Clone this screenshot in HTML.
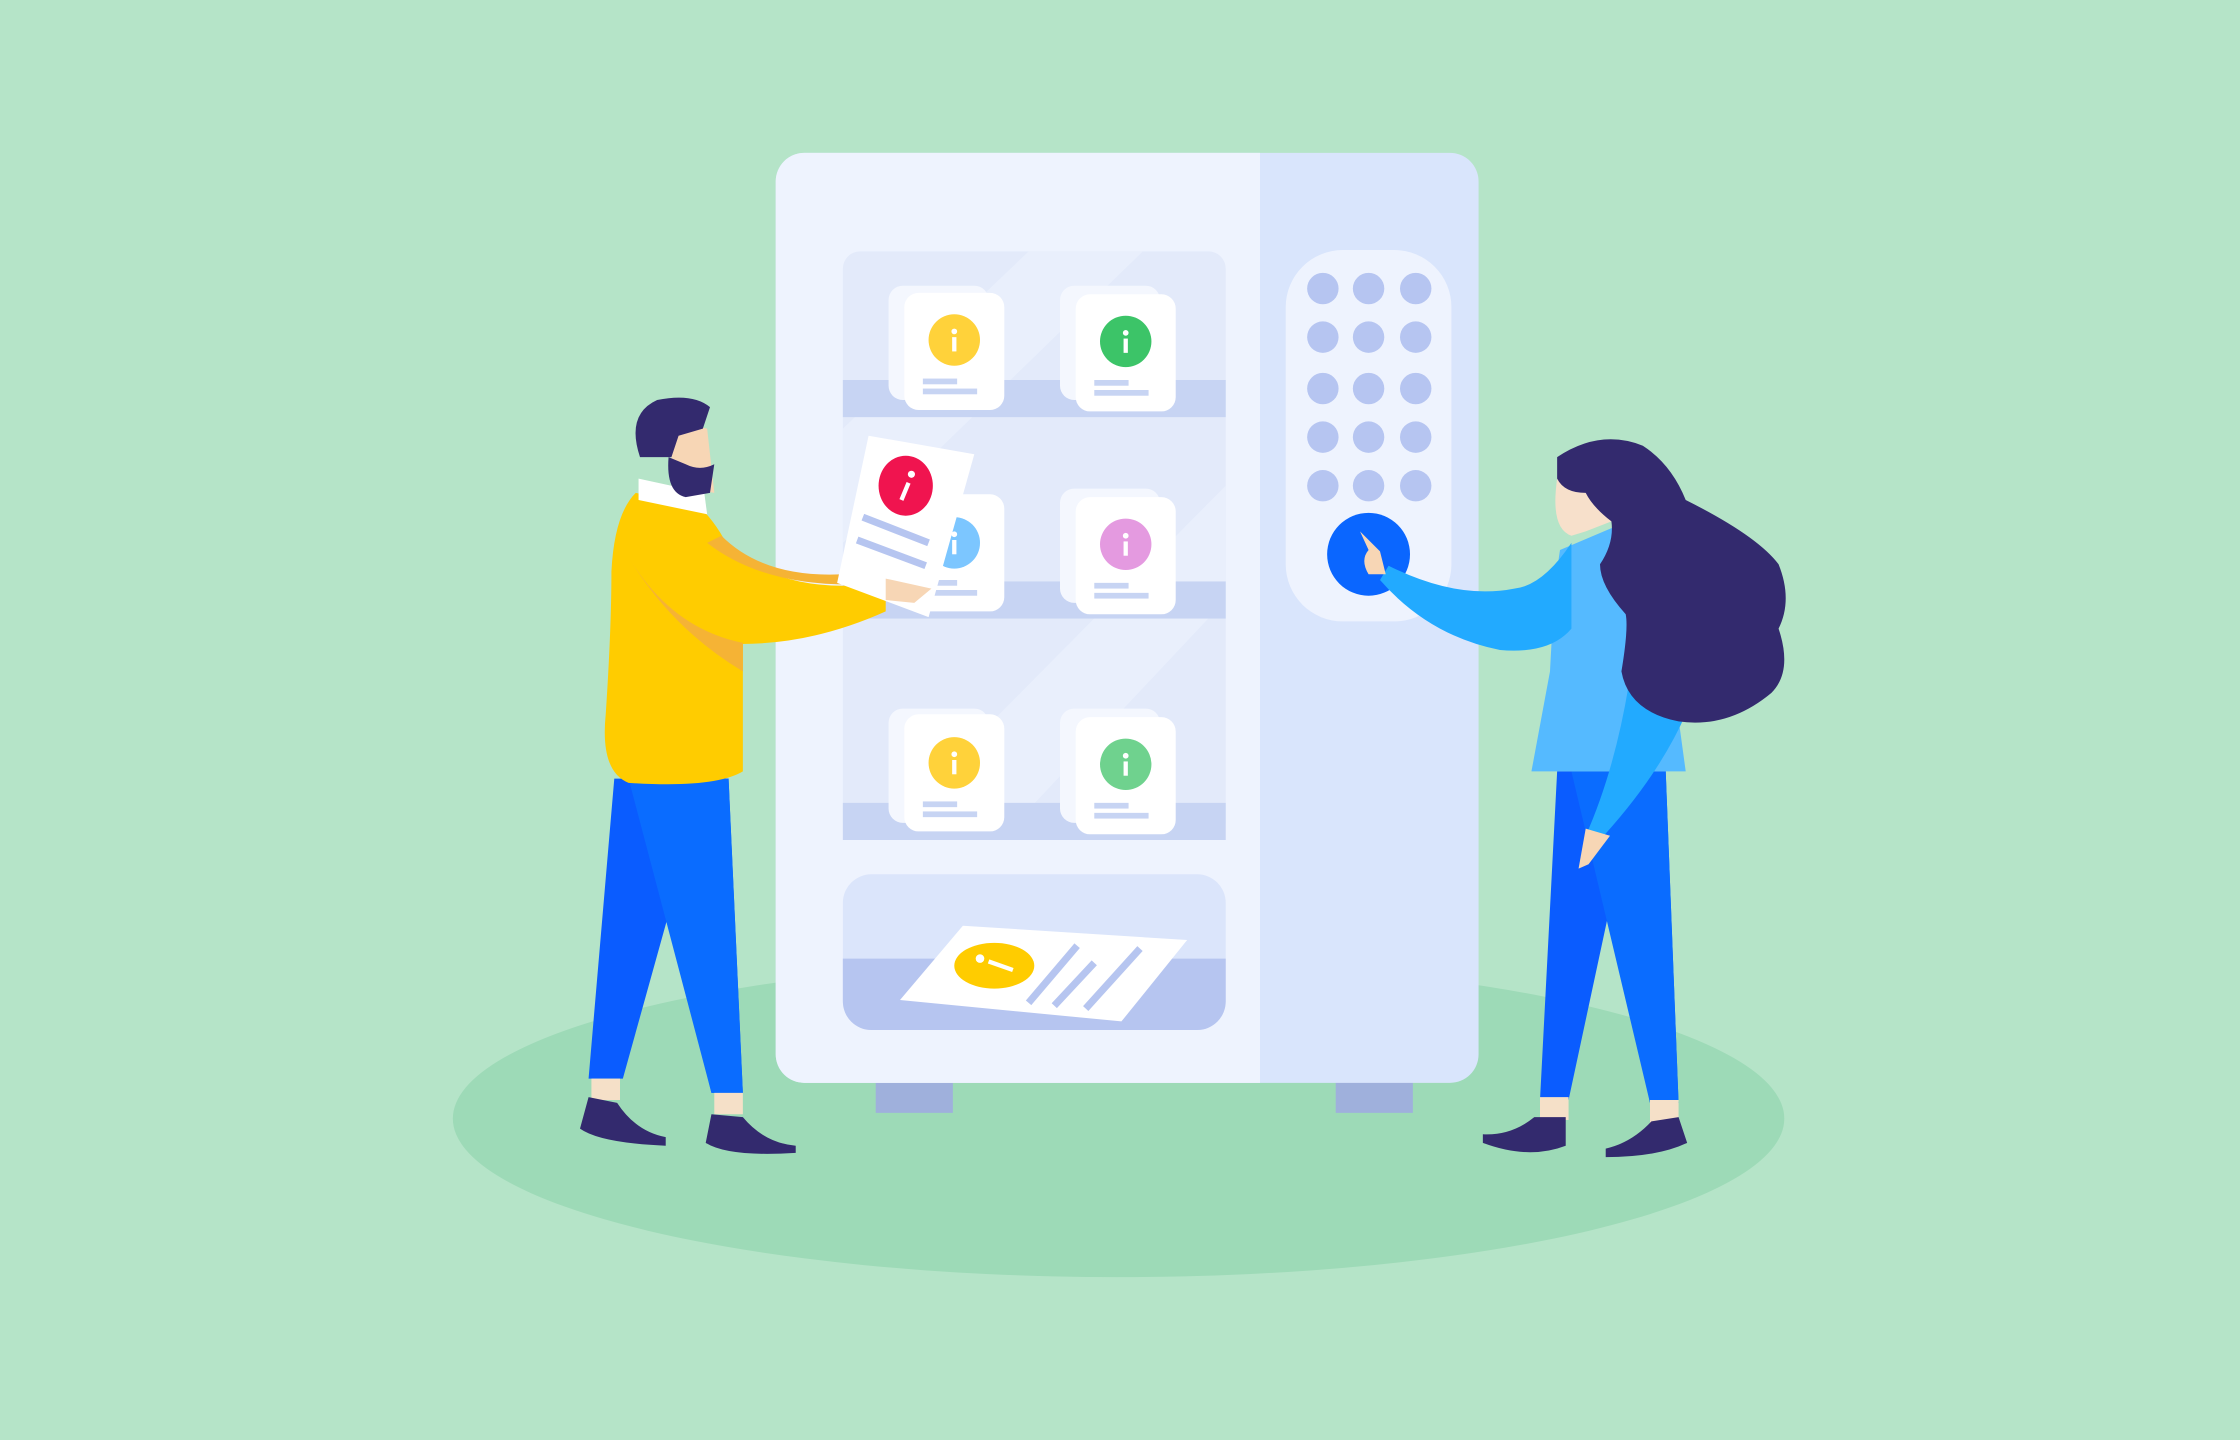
<!DOCTYPE html>
<html><head><meta charset="utf-8"><style>html,body{margin:0;padding:0;background:#b5e4c8}svg{display:block}</style></head><body>
<svg width="2240" height="1440" viewBox="0 0 1568 1008" xmlns="http://www.w3.org/2000/svg">
<rect width="1568" height="1008" fill="#b5e4c8"/>
<ellipse cx="783" cy="783" rx="466" ry="111" fill="#9ddab7"/>
<rect x="613" y="756" width="54" height="23" fill="#9fb0dc"/>
<rect x="935" y="756" width="54" height="23" fill="#9fb0dc"/>
<path d="M563 107H1015a20 20 0 0 1 20 20V738a20 20 0 0 1-20 20H563a20 20 0 0 1-20-20V127a20 20 0 0 1 20-20z" fill="#d9e5fc"/>
<path d="M563 107H882V758H563a20 20 0 0 1-20-20V127a20 20 0 0 1 20-20z" fill="#eef3fe"/>
<rect x="590" y="176" width="268" height="412" rx="12" fill="#e3eafa"/>
<path d="M590 300L720 176H800L590 380Z M640 560L858 340V420L700 588H640Z" fill="#eaf0fc" opacity="0.8"/>
<rect x="590" y="266" width="268" height="26" fill="#c7d4f3"/>
<rect x="590" y="407" width="268" height="26" fill="#c7d4f3"/>
<rect x="590" y="562" width="268" height="26" fill="#c7d4f3"/>
<g>
<rect x="622" y="200" width="70" height="80" rx="10" fill="#f4f7fe"/>
<rect x="633" y="205" width="70" height="82" rx="10" fill="#fff"/>
<circle cx="668" cy="238" r="18" fill="#ffd23a"/><rect x="646" y="265" width="24" height="4" fill="#c7d4f3"/><rect x="646" y="272" width="38" height="4" fill="#c7d4f3"/>
<rect x="742" y="200" width="70" height="80" rx="10" fill="#f4f7fe"/>
<rect x="753" y="206" width="70" height="82" rx="10" fill="#fff"/>
<circle cx="788" cy="239" r="18" fill="#3cc468"/><rect x="766" y="266" width="24" height="4" fill="#c7d4f3"/><rect x="766" y="273" width="38" height="4" fill="#c7d4f3"/>
<rect x="633" y="346" width="70" height="82" rx="10" fill="#fff"/>
<circle cx="668" cy="380" r="18" fill="#7cc6ff"/><rect x="646" y="406" width="24" height="4" fill="#c7d4f3"/><rect x="646" y="413" width="38" height="4" fill="#c7d4f3"/>
<rect x="742" y="342" width="70" height="80" rx="10" fill="#f4f7fe"/>
<rect x="753" y="348" width="70" height="82" rx="10" fill="#fff"/>
<circle cx="788" cy="381" r="18" fill="#e49ae0"/><rect x="766" y="408" width="24" height="4" fill="#c7d4f3"/><rect x="766" y="415" width="38" height="4" fill="#c7d4f3"/>
<rect x="622" y="496" width="70" height="80" rx="10" fill="#f4f7fe"/>
<rect x="633" y="500" width="70" height="82" rx="10" fill="#fff"/>
<circle cx="668" cy="534" r="18" fill="#ffd23a"/><rect x="646" y="561" width="24" height="4" fill="#c7d4f3"/><rect x="646" y="568" width="38" height="4" fill="#c7d4f3"/>
<rect x="742" y="496" width="70" height="80" rx="10" fill="#f4f7fe"/>
<rect x="753" y="502" width="70" height="82" rx="10" fill="#fff"/>
<circle cx="788" cy="535" r="18" fill="#6fd28e"/><rect x="766" y="562" width="24" height="4" fill="#c7d4f3"/><rect x="766" y="569" width="38" height="4" fill="#c7d4f3"/>
<g fill="#fff"><circle cx="668" cy="232" r="2"/><rect x="666.5" y="236" width="3" height="10"/><circle cx="788" cy="233" r="2"/><rect x="786.5" y="237" width="3" height="10"/><circle cx="668" cy="374" r="2"/><rect x="666.5" y="378" width="3" height="10"/><circle cx="788" cy="375" r="2"/><rect x="786.5" y="379" width="3" height="10"/><circle cx="668" cy="528" r="2"/><rect x="666.5" y="532" width="3" height="10"/><circle cx="788" cy="529" r="2"/><rect x="786.5" y="533" width="3" height="10"/></g>
</g>
<rect x="590" y="612" width="268" height="109" rx="20" fill="#dbe5fb"/>
<path d="M590 671H858V701a20 20 0 0 1-20 20H610a20 20 0 0 1-20-20Z" fill="#b6c5f0"/>
<path d="M674 648L831 658L785 715L630 700Z" fill="#fff"/>
<ellipse cx="696" cy="676" rx="28" ry="16" fill="#ffcc00"/>
<circle cx="686" cy="671" r="3" fill="#fff"/><path d="M692 673L709 679" stroke="#fff" stroke-width="3"/>
<path d="M720 702L754 662M738 704L766 674M760 706L798 664" stroke="#b6c5f0" stroke-width="5"/>
<rect x="900" y="175" width="116" height="260" rx="40" fill="#eef3fe"/>
<g fill="#b6c5f1">
<circle cx="926" cy="202" r="11"/><circle cx="958" cy="202" r="11"/><circle cx="991" cy="202" r="11"/>
<circle cx="926" cy="236" r="11"/><circle cx="958" cy="236" r="11"/><circle cx="991" cy="236" r="11"/>
<circle cx="926" cy="272" r="11"/><circle cx="958" cy="272" r="11"/><circle cx="991" cy="272" r="11"/>
<circle cx="926" cy="306" r="11"/><circle cx="958" cy="306" r="11"/><circle cx="991" cy="306" r="11"/>
<circle cx="926" cy="340" r="11"/><circle cx="958" cy="340" r="11"/><circle cx="991" cy="340" r="11"/>
</g>
<circle cx="958" cy="388" r="29" fill="#0a66ff"/>
<path d="M430 545L412 755H436L468 640L498 765H520L510 545Z" fill="#0a5cff"/>
<path d="M440 545L498 765H520L510 545Z" fill="#0a6cff"/>
<path d="M414 755h20v15h-20zM500 765h20v15h-20z" fill="#f5e0c8"/>
<path d="M412 768L432 772Q445 792 466 796V802Q420 800 406 790Z M498 780L520 782Q535 800 557 802V807Q510 810 494 800Z" fill="#332a6e"/>
<path d="M445 345L490 355Q515 380 520 420V540Q500 552 440 548Q420 540 424 500Q428 440 428 400Q430 360 445 345Z" fill="#ffcc00"/>
<path d="M490 355Q520 410 590 410L620 408V428Q560 455 500 450Q460 440 440 390Z" fill="#ffcc00"/>
<path d="M440 390Q470 440 520 470V450Q470 440 440 390Z M495 380Q540 415 620 408L610 400Q540 410 505 375Z" fill="#f5b335"/>
<path d="M447 335L493 345L495 360L447 350Z" fill="#fff"/>
<path d="M470 295L495 300L500 345L470 340Z" fill="#f7d6b5"/>
<path d="M468 320Q466 345 480 348L497 345L500 325Q490 330 480 325Z" fill="#332a6e"/>
<path d="M448 320Q438 290 460 280Q485 275 497 285L492 300L475 305L470 320Z" fill="#332a6e"/>
<path d="M608 305L682 318L650 432L586 408Z" fill="#fff"/>
<ellipse cx="634" cy="340" rx="19" ry="21" fill="#f0144f"/>
<circle cx="638" cy="332" r="2.5" fill="#fff"/><path d="M636 338L631 350" stroke="#fff" stroke-width="3"/>
<path d="M604 362L650 380M600 378L648 396" stroke="#b6c5f0" stroke-width="5"/>
<path d="M620 405L652 412L640 422L620 420Z" fill="#f7d6b5"/>
<path d="M1090 540L1078 770H1098L1128 630L1155 772H1175L1166 540Z" fill="#0a5cff"/>
<path d="M1100 540L1155 772H1175L1166 540Z" fill="#0a6cff"/>
<path d="M1078 768h20v16h-20zM1155 770h20v16h-20z" fill="#f5e0c8"/>
<path d="M1074 782H1096V802Q1070 812 1038 800V794Q1058 795 1074 782Z M1156 785L1175 782L1181 800Q1160 810 1124 810V804Q1142 800 1156 785Z" fill="#332a6e"/>
<path d="M1092 385L1132 368Q1160 380 1165 430L1180 540H1072L1085 470Q1088 410 1092 385Z" fill="#55baff"/>
<path d="M1100 380Q1080 410 1060 412Q1020 420 972 396L966 406Q1000 445 1050 455Q1085 458 1100 440Z" fill="#22aaff"/>
<path d="M1140 480Q1130 540 1110 585L1118 590Q1160 545 1180 500Z" fill="#22aaff"/>
<path d="M1110 580L1105 608L1112 605L1127 585Z" fill="#f7d6b5"/>
<path d="M952 372L966 386L970 402L958 402Q952 392 958 385Z" fill="#f7d6b5"/>
<path d="M1090 335Q1085 370 1100 375L1110 372L1128 365L1120 330Z" fill="#f7e0cb"/>
<path d="M1090 320Q1120 300 1150 312Q1170 325 1180 350Q1230 375 1245 395Q1255 420 1245 440Q1255 470 1240 485Q1210 510 1175 505Q1140 498 1135 470Q1140 440 1138 430Q1120 410 1120 395Q1130 380 1128 365Q1115 355 1110 345Q1095 345 1090 335Z" fill="#332a6e"/>
</svg>
</body></html>
